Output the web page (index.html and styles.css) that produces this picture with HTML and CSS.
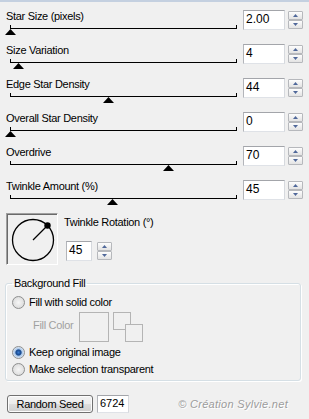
FILE: index.html
```html
<!DOCTYPE html>
<html>
<head>
<meta charset="utf-8">
<link rel="stylesheet" href="styles.css">
</head>
<body>
<div class="panel">
  <div class="row">
    <div class="left">
      <div class="label">Star Size (pixels)</div>
      <div class="track"><span class="thumb" style="left:0px"></span></div>
    </div>
    <div class="field">2.00</div>
    <div class="spin"><span class="up"></span><span class="down"></span></div>
  </div>
  <div class="row">
    <div class="left">
      <div class="label">Size Variation</div>
      <div class="track"><span class="thumb" style="left:8px"></span></div>
    </div>
    <div class="field">4</div>
    <div class="spin"><span class="up"></span><span class="down"></span></div>
  </div>
  <div class="row">
    <div class="left">
      <div class="label">Edge Star Density</div>
      <div class="track"><span class="thumb" style="left:98px"></span></div>
    </div>
    <div class="field">44</div>
    <div class="spin"><span class="up"></span><span class="down"></span></div>
  </div>
  <div class="row">
    <div class="left">
      <div class="label">Overall Star Density</div>
      <div class="track"><span class="thumb" style="left:0px"></span></div>
    </div>
    <div class="field">0</div>
    <div class="spin"><span class="up"></span><span class="down"></span></div>
  </div>
  <div class="row">
    <div class="left">
      <div class="label">Overdrive</div>
      <div class="track"><span class="thumb" style="left:158px"></span></div>
    </div>
    <div class="field">70</div>
    <div class="spin"><span class="up"></span><span class="down"></span></div>
  </div>
  <div class="row">
    <div class="left">
      <div class="label">Twinkle Amount (%)</div>
      <div class="track"><span class="thumb" style="left:102px"></span></div>
    </div>
    <div class="field">45</div>
    <div class="spin"><span class="up"></span><span class="down"></span></div>
  </div>

  <div class="dialrow">
    <div class="dial">
      <svg width="50" height="50" viewBox="0 0 50 50">
        <circle cx="26" cy="26" r="20.5" fill="none" stroke="#000" stroke-width="1.3"/>
        <line x1="26" y1="26" x2="40.5" y2="11.5" stroke="#000" stroke-width="1.3"/>
        <circle cx="40.5" cy="11.5" r="3.2" fill="#000"/>
      </svg>
    </div>
    <div class="rot">
      <div class="label">Twinkle Rotation (°)</div>
      <div class="rotctl">
        <div class="field rotfield">45</div>
        <div class="spin rotspin"><span class="up"></span><span class="down"></span></div>
      </div>
    </div>
  </div>

  <fieldset class="group">
    <legend>Background Fill</legend>
    <div class="opt"><span class="radio"></span>Fill with solid color</div>
    <div class="fillrow">
      <span class="fillabel">Fill Color</span>
      <span class="swatch"></span>
      <svg class="swap" width="31" height="31" viewBox="0 0 31 31">
        <rect x="0.5" y="0.5" width="17" height="17" fill="#f0f0f0" stroke="#b4b4b4"/>
        <rect x="12.5" y="12.5" width="17" height="17" fill="#f0f0f0" stroke="#b4b4b4"/>
      </svg>
    </div>
    <div class="opt opt2"><span class="radio on"></span>Keep original image</div>
    <div class="opt opt3"><span class="radio"></span>Make selection transparent</div>
  </fieldset>

  <div class="bottom">
    <div class="btn">Random Seed</div>
    <div class="field seed">6724</div>
    <div class="mark">© Création Sylvie.net</div>
  </div>
</div>
</body>
</html>
```
FILE: styles.css
```css
html, body {
  margin: 0;
  padding: 0;
}
body {
  background: #f0f0f0 linear-gradient(#c4d0e0, #c4d0e0) 0 0 / 100% 2px no-repeat;
  font: 11px/13px "Liberation Sans", Arial, sans-serif;
  letter-spacing: -0.3px;
  color: #000;
  width: 309px;
  height: 419px;
  overflow: hidden;
}
.panel {
  width: 309px;
}
.row {
  display: flex;
  align-items: flex-start;
  height: 34px;
  box-sizing: border-box;
  padding: 10px 0 0 6px;
}
.left {
  width: 231px;
  flex: none;
}
.label {
  height: 13px;
  white-space: nowrap;
}
.track {
  position: relative;
  margin: 2px 0 0 4px;
  width: 227px;
  height: 4px;
  box-sizing: border-box;
  border: 1px solid #000;
  border-top: 0;
}
.thumb {
  position: absolute;
  top: 1px;
  top: calc(100% + 1px);
  margin-left: -6px;
  width: 11px;
  height: 6px;
  background: #000;
  clip-path: polygon(50% 0, 100% 100%, 0 100%);
}
.field {
  flex: none;
  margin-left: 6px;
  width: 42px;
  height: 20px;
  box-sizing: border-box;
  border: 1px solid;
  border-color: #a3a5aa #d6d9de #dfe2e7 #b3b5ba;
  background: #fff;
  font-size: 12px;
  line-height: 16px;
  padding-left: 2px;
  letter-spacing: 0;
}
.spin {
  flex: none;
  margin: 1px 0 0 3px;
  width: 15px;
  display: flex;
  flex-direction: column;
}
.spin span {
  height: 9px;
  box-sizing: border-box;
  border: 1px solid #b6b8bc;
  border-radius: 1px;
  background: linear-gradient(#fdfdfd, #e3e3e3);
  display: flex;
  align-items: center;
  justify-content: center;
}
.spin span::before {
  content: "";
  width: 5px;
  height: 3px;
  background: #50689a;
  clip-path: polygon(50% 0, 100% 100%, 0 100%);
}
.spin .down::before {
  clip-path: polygon(0 0, 100% 0, 50% 100%);
}

.dialrow {
  display: flex;
  align-items: flex-start;
  margin-top: 9px;
  padding-left: 6px;
}
.dial {
  width: 52px;
  height: 52px;
  box-sizing: border-box;
  border: 1px solid;
  border-color: #a0a0a0 #ffffff #ffffff #a0a0a0;
  box-shadow: inset 1px 1px 0 #6a6a6a;
}
.dial svg {
  display: block;
}
.rot {
  margin-left: 6px;
  padding-top: 3px;
}
.rotctl {
  display: flex;
  margin-top: 12px;
  margin-left: 2px;
}
.rotfield {
  margin-left: 0;
  width: 26px;
}
.rotspin {
  margin-left: 5px;
}

.group {
  margin: 12px 0 0 5px;
  width: 296px;
  box-sizing: border-box;
  border: 1px solid #d5dfe5;
  border-radius: 3px;
  box-shadow: inset 1px 1px 0 #fff, 1px 1px 0 #fff;
  padding: 6px 6px 4px 6px;
  min-width: 0;
}
.group legend {
  padding: 0 2px;
  line-height: 13px;
}
.opt {
  display: flex;
  align-items: center;
  height: 13px;
  white-space: nowrap;
}
.opt2, .opt3 {
  margin-top: 4px;
}
.radio {
  flex: none;
  width: 13px;
  height: 13px;
  box-sizing: border-box;
  border-radius: 50%;
  border: 1px solid #8e8f8f;
  background: radial-gradient(circle, #f6f6f6 0, #e2e2e2 60%, #cdcdcd 100%);
  margin-right: 4px;
}
.radio.on {
  background: radial-gradient(circle, #3a7bd0 0, #15478c 2.6px, #a9c6e8 3.6px, #e4edf8 6px);
}
.fillrow {
  display: flex;
  align-items: flex-start;
  margin-top: 3px;
  height: 30px;
}
.fillabel {
  margin: 7px 0 0 21px;
  color: #a0a0a0;
  white-space: nowrap;
}
.swatch {
  margin-left: 6px;
  width: 30px;
  height: 30px;
  box-sizing: border-box;
  border: 1px solid #b4b4b4;
}
.swap {
  display: block;
  margin-left: 4px;
}

.bottom {
  display: flex;
  align-items: center;
  margin-top: 14px;
  padding-left: 7px;
}
.btn {
  width: 86px;
  height: 18px;
  box-sizing: border-box;
  border: 1px solid #707070;
  border-radius: 3px;
  background: linear-gradient(#f2f2f2 0, #ebebeb 50%, #dddddd 50%, #cfcfcf 100%);
  box-shadow: inset 0 0 0 1px #fcfcfc;
  text-align: center;
  line-height: 16px;
}
.seed {
  margin-left: 4px;
  width: 32px;
  height: 18px;
  font-size: 11px;
  line-height: 15px;
}
.mark {
  margin-left: auto;
  margin-right: 21px;
  font-style: italic;
  color: #9c9c9c;
  text-shadow: 1px 1px 0 #fff;
  letter-spacing: 0.3px;
  white-space: nowrap;
}
```
